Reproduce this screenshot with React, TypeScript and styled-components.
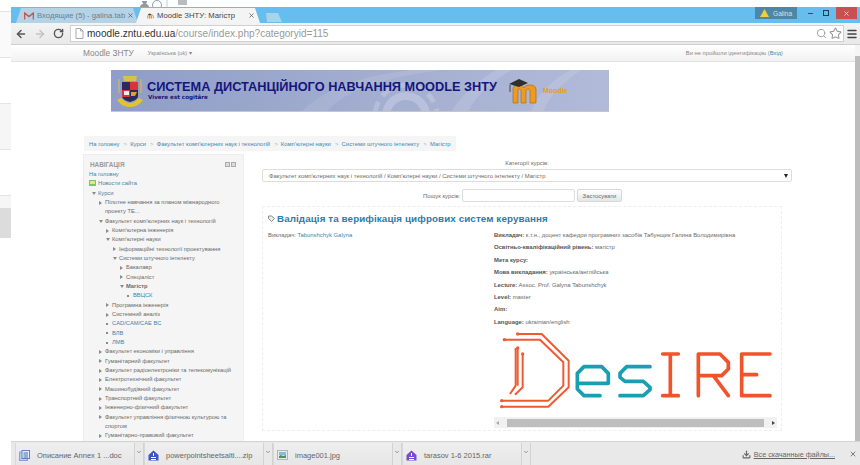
import styled, { createGlobalStyle } from 'styled-components';
import { ArrowLeft, ArrowRight, RotateCw, Search, Star, Menu, X, Minus, Download, ChevronDown } from 'lucide-react';

const GlobalStyle = createGlobalStyle`
	html, body {
		margin: 0;
		width: 860px;
		height: 465px;
		overflow: hidden;
		background: #fff;
		font-family: "Liberation Sans", Arial, sans-serif;
	}
	* { box-sizing: border-box; }
`;

const link = '#3f86ad';
const text = '#6a6a6a';

const Screen = styled.div`
	width: 860px;
	height: 465px;
	display: flex;
	flex-direction: column;
	overflow: hidden;
`;

const DesktopTop = styled.div`
	height: 7px;
	flex: none;
	display: flex;
	align-items: flex-end;
	padding-left: 140px;
	gap: 3px;
	overflow: hidden;
`;

const DesktopGlyph = styled.svg`
	display: block;
	flex: none;
`;

const Desktop = styled.div`
	flex: 1;
	min-height: 0;
	display: flex;
`;

const DesktopEdge = styled.div`
	width: 11px;
	flex: none;
	display: flex;
	flex-direction: column;
	background: #fff;
`;

const EdgeBand = styled.div<{ $h: number; $tone: string; $line?: boolean }>`
	height: ${p => p.$h}px;
	flex: none;
	background: ${p => p.$tone};
	border-bottom: ${p => (p.$line ? '1px solid #e4e4e4' : '0')};
`;

const Browser = styled.div`
	flex: 1;
	min-width: 0;
	display: flex;
	flex-direction: column;
`;

const TabStrip = styled.div`
	height: 16px;
	flex: none;
	display: flex;
	align-items: flex-end;
	background: #66bdf0;
	padding-left: 5px;
`;

const Tab = styled.div<{ $active?: boolean }>`
	width: ${p => (p.$active ? 124 : 122)}px;
	height: 15px;
	margin-right: -2px;
	display: flex;
	align-items: center;
	gap: 3px;
	padding: ${p => (p.$active ? '0 5px 0 11px' : '0 4px 0 8px')};
	font-size: 7.7px;
	white-space: nowrap;
	color: ${p => (p.$active ? '#444' : '#6f7f8a')};
	background: ${p => (p.$active ? '#f4f4f4' : '#b4d3e6')};
	clip-path: polygon(5px 0, calc(100% - 5px) 0, 100% 100%, 0 100%);
`;

const TabTitle = styled.span`
	flex: 1;
	min-width: 0;
`;

const NewTab = styled.div`
	width: 19px;
	height: 9px;
	margin: 0 0 1px 5px;
	background: #a9d3ec;
	clip-path: polygon(3px 0, calc(100% - 4px) 0, 100% 100%, 4px 100%);
`;

const WindowControls = styled.div`
	margin-left: auto;
	align-self: flex-start;
	display: flex;
	align-items: stretch;
	height: 12px;
	padding-right: 3px;
`;

const UserBadge = styled.div`
	width: 42px;
	display: flex;
	align-items: center;
	gap: 4px;
	padding-left: 5px;
	margin-right: 5px;
	font-size: 6.6px;
	color: #cfe3ee;
	background: #4c87a8;
`;

const ControlButton = styled.div<{ $close?: boolean }>`
	width: ${p => (p.$close ? 21 : 16)}px;
	margin-left: ${p => (p.$close ? 2 : 0)}px;
	display: flex;
	align-items: center;
	justify-content: center;
	color: ${p => (p.$close ? '#f3dcdc' : '#2b3a44')};
	background: ${p => (p.$close ? '#c9504f' : 'transparent')};
`;

const Restore = styled.div`
	width: 6px;
	height: 6px;
	border: 1.5px solid #2b3a44;
`;

const Toolbar = styled.div`
	height: 22px;
	flex: none;
	display: flex;
	align-items: center;
	padding: 0 1px 0 4px;
	background: linear-gradient(#f3f3f3, #e9e9e9);
	border-bottom: 1px solid #cfcfcf;
	color: #555;
`;

const NavButtons = styled.div`
	width: 55px;
	flex: none;
	display: flex;
	align-items: center;
	gap: 7px;
`;

const AddressBar = styled.div`
	flex: 1;
	height: 17px;
	display: flex;
	align-items: center;
	gap: 3px;
	padding: 0 1px 0 4px;
	background: #fff;
	border: 1px solid #d0d0d0;
	font-size: 10.05px;
	color: #999;
	white-space: nowrap;
`;

const Host = styled.span`
	color: #333;
`;

const AddressIcons = styled.div`
	margin-left: auto;
	display: flex;
	align-items: center;
	gap: 2px;
	color: #999;
`;

const MenuSlot = styled.div`
	width: 15px;
	flex: none;
	display: flex;
	justify-content: center;
	color: #444;
`;

const Viewport = styled.div`
	flex: 1;
	min-height: 0;
	display: flex;
	overflow: hidden;
`;

const Page = styled.div`
	flex: 1;
	min-width: 0;
	display: flex;
	flex-direction: column;
	overflow: hidden;
	background: #fff;
`;

const Scrollbar = styled.div`
	width: 5px;
	flex: none;
	display: flex;
	flex-direction: column;
	padding-top: 11px;
	background: #f5f5f5;
`;

const ScrollThumb = styled.div`
	flex: 1;
	background: #bdbdbd;
`;

const NavBar = styled.div`
	height: 17px;
	flex: none;
	display: flex;
	align-items: center;
	padding: 0 72px 0 72px;
	background: linear-gradient(#fff, #f2f2f2);
	border-bottom: 1px solid #e2e2e2;
	color: #888;
`;

const Brand = styled.span`
	font-size: 8.3px;
	margin-right: 14px;
`;

const Lang = styled.span`
	font-size: 5.6px;
`;

const Login = styled.span`
	margin-left: auto;
	font-size: 5.8px;
	a { color: ${link}; }
`;

const Banner = styled.div`
	position: relative;
	width: 498px;
	height: 42px;
	flex: none;
	margin: 8px 0 0 100px;
	display: flex;
	align-items: center;
	padding-left: 5px;
	overflow: hidden;
	background: linear-gradient(90deg, #8f9dc7, #a3aed0 55%, #b1bad9);
	border-bottom: 1px solid #dcbcc6;
`;

const BannerArt = styled.svg`
	position: absolute;
	inset: 0;
`;

const Crest = styled.svg`
	position: relative;
	flex: none;
	margin-right: 3px;
`;

const BannerTitles = styled.div`
	position: relative;
	width: 358px;
	margin-top: -2px;
`;

const BannerTitle = styled.div`
	font-size: 12.75px;
	line-height: 15px;
	font-weight: bold;
	white-space: nowrap;
	color: #15157e;
`;

const BannerMotto = styled.div`
	padding-left: 1px;
	font-size: 5.6px;
	font-weight: bold;
	font-family: "DejaVu Sans", Verdana, sans-serif;
	color: #15157e;
`;

const MoodleMark = styled.svg`
	position: relative;
	flex: none;
	margin-left: 3px;
`;

const MoodleWord = styled.span`
	position: relative;
	margin-left: 3px;
	font-size: 7px;
	font-weight: bold;
	color: #e69a2e;
`;

const Breadcrumb = styled.div`
	width: 372px;
	height: 15px;
	flex: none;
	margin: 24px 0 3px 73px;
	display: flex;
	align-items: center;
	gap: 4px;
	padding-left: 5px;
	font-size: 5.9px;
	white-space: nowrap;
	color: ${link};
	background: #f5f5f5;
`;

const Crumb = styled.span``;

const CrumbSep = styled.span`
	color: #b0b0b0;
`;

const Columns = styled.div`
	flex: 1;
	min-height: 0;
	display: flex;
	padding-left: 72px;
	gap: 18px;
`;

const NavBlock = styled.div`
	width: 161px;
	flex: none;
	padding: 4px 0 0 5px;
	background: #f5f5f5;
	border: 1px solid #eee;
	border-bottom: 0;
`;

const NavHead = styled.div`
	height: 10px;
	display: flex;
	align-items: center;
	justify-content: space-between;
	padding: 0 7px 0 1px;
	margin-bottom: 1px;
	font-size: 6.4px;
	font-weight: bold;
	color: #9a9a9a;
`;

const DockIcons = styled.div`
	display: flex;
	gap: 1px;
`;

const DockIcon = styled.div`
	width: 5px;
	height: 5px;
	border: 1px solid #aaa;
	background: #ddd;
`;

const TreeRow = styled.div<{ $level: number; $link?: boolean; $bold?: boolean }>`
	display: flex;
	min-height: 9.33px;
	padding-left: ${p => p.$level * 7}px;
	font-size: 5.75px;
	line-height: 9.33px;
	white-space: pre-line;
	font-weight: ${p => (p.$bold ? 'bold' : 'normal')};
	color: ${p => (p.$link ? link : text)};
`;

const Marker = styled.span`
	width: 9px;
	height: 9.33px;
	flex: none;
	display: flex;
	align-items: center;
`;

const Arrow = styled.i<{ $open?: boolean }>`
	width: 0;
	height: 0;
	margin-left: 2.5px;
	${p =>
		p.$open
			? 'border-left: 2.5px solid transparent; border-right: 2.5px solid transparent; border-top: 3px solid #8a8a8a;'
			: 'border-top: 2.5px solid transparent; border-bottom: 2.5px solid transparent; border-left: 3px solid #8a8a8a;'}
`;

const Bullet = styled.i`
	width: 2px;
	height: 2px;
	margin-left: 3px;
	background: #8a8a8a;
`;

const SiteIcon = styled.svg`
	flex: none;
	margin: 1px 2px 0 0;
`;

const Main = styled.div`
	width: 530px;
	flex: none;
	display: flex;
	flex-direction: column;
	padding-top: 5px;
	font-size: 5.9px;
	color: ${text};
`;

const CategoryLabel = styled.div`
	height: 9px;
	text-align: center;
	line-height: 9px;
`;

const CategorySelect = styled.div`
	height: 13px;
	margin-top: 1px;
	display: flex;
	align-items: center;
	justify-content: space-between;
	padding: 0 3px 0 6px;
	background: #fff;
	border: 1px solid #ddd;
	border-radius: 2px;
`;

const SelectCaret = styled.i`
	width: 0;
	height: 0;
	border-left: 2.5px solid transparent;
	border-right: 2.5px solid transparent;
	border-top: 4px solid #222;
`;

const SearchRow = styled.div`
	height: 13px;
	margin: 7px 0 4px 161px;
	display: flex;
	align-items: center;
`;

const SearchLabel = styled.span`
	width: 39px;
`;

const SearchInput = styled.div`
	width: 113px;
	height: 13px;
	margin-right: 2px;
	background: #fff;
	border: 1px solid #ddd;
	border-radius: 2px;
`;

const ApplyButton = styled.div`
	width: 45px;
	height: 13px;
	display: flex;
	align-items: center;
	justify-content: center;
	background: linear-gradient(#fff, #e6e6e6);
	border: 1px solid #d8d8d8;
	border-radius: 2px;
`;

const CourseBox = styled.div`
	width: 520px;
	height: 225px;
	flex: none;
	padding: 5px 5px 0 5px;
	border: 1px dashed #eee;
`;

const CourseTitle = styled.div`
	height: 13px;
	display: flex;
	align-items: center;
	gap: 2px;
	font-size: 9.8px;
	font-weight: bold;
	letter-spacing: 0.1px;
	white-space: nowrap;
	color: #2b7cab;
`;

const CourseBody = styled.div`
	display: flex;
	margin-top: 4px;
`;

const Teacher = styled.div`
	width: 226px;
	flex: none;
	line-height: 12.4px;
	a { color: ${link}; }
`;

const Summary = styled.div`
	width: 284px;
	flex: none;
`;

const SummaryLine = styled.div`
	height: 12.4px;
	line-height: 12.4px;
	white-space: nowrap;
	b { color: #555; }
`;

const DesireLogo = styled.svg`
	display: block;
	margin-top: -4px;
`;

const LogoScroll = styled.div`
	width: 283px;
	height: 11px;
	margin-top: 3px;
	display: flex;
	align-items: center;
	justify-content: space-between;
	padding: 0 2px;
	background: #f1f1f1;
`;

const LogoThumb = styled.div`
	width: 257px;
	height: 8px;
	background: #bebebe;
`;

const ScrollArrow = styled.i<{ $dir: 'left' | 'right' }>`
	width: 0;
	height: 0;
	border-top: 2px solid transparent;
	border-bottom: 2px solid transparent;
	${p => (p.$dir === 'left' ? 'border-right: 3px solid #aaa;' : 'border-left: 3px solid #444;')}
`;

const Downloads = styled.div`
	height: 24px;
	flex: none;
	display: flex;
	align-items: stretch;
	padding: 1px 0 0 4px;
	background: #e9e9e9;
	border-top: 1px solid #d4d4d4;
`;

const DownloadItem = styled.div`
	width: 129px;
	flex: none;
	display: flex;
	border-left: 1px solid #d8d8d8;
`;

const DownloadName = styled.div`
	flex: 1;
	display: flex;
	align-items: center;
	gap: 7px;
	padding: 2px 0 0 3px;
	font-size: 7.5px;
	white-space: nowrap;
	color: #666;
	background: linear-gradient(#efefef, #e6e6e6);
	border-right: 1px solid #d2d2d2;
`;

const DownloadCaret = styled.div`
	width: 9px;
	flex: none;
	display: flex;
	justify-content: center;
	padding-top: 6px;
	border-right: 1px solid #d2d2d2;
	color: #777;
`;

const AllDownloads = styled.div`
	margin-left: auto;
	display: flex;
	align-items: center;
	gap: 3px;
	padding-right: 3px;
	font-size: 7.2px;
	color: #666;
	span { text-decoration: underline; margin-right: 11px; }
`;

type Node = {
	level: number;
	label: string;
	mark?: 'open' | 'closed' | 'dot' | 'site';
	link?: boolean;
	bold?: boolean;
};

const tree: Node[] = [
	{ level: 0, label: 'На головну', link: true },
	{ level: 0, label: 'Новости сайта', mark: 'site', link: true },
	{ level: 0, label: 'Курси', mark: 'open', link: true },
	{ level: 1, label: 'Пілотне навчання за планом міжнародного\nпроекту TE...', mark: 'closed' },
	{ level: 1, label: 'Факультет комп\'ютерних наук і технологій', mark: 'open' },
	{ level: 2, label: 'Комп\'ютерна інженерія', mark: 'closed' },
	{ level: 2, label: 'Комп\'ютерні науки', mark: 'open' },
	{ level: 3, label: 'Інформаційні технології проектування', mark: 'closed' },
	{ level: 3, label: 'Системи штучного інтелекту', mark: 'open' },
	{ level: 4, label: 'Бакалавр', mark: 'closed' },
	{ level: 4, label: 'Спеціаліст', mark: 'closed' },
	{ level: 4, label: 'Магістр', mark: 'open', bold: true },
	{ level: 5, label: 'ВВЦСК', mark: 'dot', link: true },
	{ level: 2, label: 'Програмна інженерія', mark: 'closed' },
	{ level: 2, label: 'Системний аналіз', mark: 'closed' },
	{ level: 2, label: 'CAD/CAM/CAE ВС', mark: 'dot', link: true },
	{ level: 2, label: 'ВЛВ', mark: 'dot', link: true },
	{ level: 2, label: 'ЛМВ', mark: 'dot', link: true },
	{ level: 1, label: 'Факультет економіки і управління', mark: 'closed' },
	{ level: 1, label: 'Гуманітарний факультет', mark: 'closed' },
	{ level: 1, label: 'Факультет радіоелектроніки та телекомунікацій', mark: 'closed' },
	{ level: 1, label: 'Електротехнічний факультет', mark: 'closed' },
	{ level: 1, label: 'Машинобудівний факультет', mark: 'closed' },
	{ level: 1, label: 'Транспортний факультет', mark: 'closed' },
	{ level: 1, label: 'Інженерно-фізичний факультет', mark: 'closed' },
	{ level: 1, label: 'Факультет управління фізичною культурою та\nспортом', mark: 'closed' },
	{ level: 1, label: 'Гуманітарно-правовий факультет', mark: 'closed' },
];

const crumbs = [
	'На головну',
	'Курси',
	'Факультет комп\'ютерних наук і технологій',
	'Комп\'ютерні науки',
	'Системи штучного інтелекту',
	'Магістр',
];

const summary: [string, string][] = [
	['Викладач:', 'к.т.н., доцент кафедри програмних засобів Табунщик Галина Володимирівна'],
	['Освітньо-кваліфікаційний рівень:', 'магістр'],
	['Мета курсу:', ''],
	['Мова викладання:', 'українська/англійська'],
	['Lecture:', 'Assoc. Prof. Galyna Tabunshchyk'],
	['Level:', 'master'],
	['Aim:', ''],
	['Language:', 'ukrainian/english'],
];

const GmailIcon = () => (
	<svg width="10" height="8" viewBox="0 0 10 8">
		<path d="M0.5 7.5V1L5 4.6 9.5 1v6.5" fill="none" stroke="#c9574c" strokeWidth="1.6" />
	</svg>
);

const MoodleTabIcon = () => (
	<svg width="7" height="8" viewBox="0 0 10 9">
		<path d="M1 8V4.2C1 3 3.4 3 3.4 4.2V8M3.6 8V4.2C3.6 3 6 3 6 4.2V8M6.2 8V4.2C6.2 3 9 3 9 4.2V8" fill="none" stroke="#e8922a" strokeWidth="1.4" />
		<path d="M1 2.4 4 1l3 1.4-3 1z" fill="#444" />
	</svg>
);

const PageIcon = () => (
	<svg width="9" height="11" viewBox="0 0 9 11">
		<path d="M1 .5h4.5L8 3v7.5H1zM5.5 .5V3H8" fill="#fff" stroke="#aaa" />
	</svg>
);

const ArchiveIcon = ({ color }: { color: string }) => (
	<svg width="11" height="11" viewBox="0 0 11 11">
		<path d="M5.5 .5 10.5 5v5.5H.5V5z" fill={color} />
		<path d="M3 7.5h5M3 9.5h5M5.5 3v3" stroke="#fff" />
	</svg>
);

const WordIcon = () => (
	<svg width="11" height="11" viewBox="0 0 11 11">
		<rect x="0.5" y="2" width="8" height="8.5" fill="#b9cbe6" stroke="#8aa3cc" />
		<rect x="3" y="0.5" width="7.5" height="8" fill="#e8eef8" stroke="#5f83bd" />
		<path d="M4.5 3h4.5M4.5 5h4.5M4.5 7h4.5" stroke="#3f6bb0" />
	</svg>
);

const PictureIcon = () => (
	<svg width="11" height="10" viewBox="0 0 11 10">
		<rect x="0.5" y="0.5" width="10" height="9" fill="#e7eef2" stroke="#a9b6bd" />
		<rect x="2" y="2" width="7" height="3" fill="#7fbdd8" />
		<path d="M2 8V6l2-1 2 1 3-1v3z" fill="#5d8a5e" />
	</svg>
);

const CrestMark = () => (
	<Crest width="28" height="36" viewBox="0 0 28 36">
		<path d="M7 3h14l-1 5H8z" fill="#d6c24a" />
		<path d="M3 6v14M25 6v14" stroke="#d6c24a" strokeWidth="1" />
		<path d="M6 9h16v14c0 3-4 5-8 6-4-1-8-3-8-6z" fill="#2c2a5c" />
		<rect x="14" y="9" width="8" height="8" fill="#d8323a" />
		<rect x="6" y="17" width="8" height="7" fill="#d8323a" />
		<rect x="8" y="18" width="5" height="4" fill="#f4efe4" />
		<path d="M15 19h6l-2 4h-4z" fill="#d6a52a" />
		<path d="M1 27c4 5 8 7 13 7s9-2 13-7l-4-2c-3 3-6 5-9 5s-6-2-9-5z" fill="#e4c22c" />
	</Crest>
);

const MoodleLogo = () => (
	<MoodleMark width="32" height="26" viewBox="0 0 32 26">
		<path d="M5 25V11c0-3 3-4 6-4s4 1 5 3c1-2 3-3 6-3 4 0 6 2 6 5v13h-6V13c0-1-1-2-2-2s-2 1-2 2v12h-5V13c0-1-1-2-2-2s-1 1-1 2v12z" fill="#ee9a1e" stroke="#a8620f" strokeWidth="0.6" />
		<path d="M1 6 11 1l9 4-9 4z" fill="#2f2f2f" />
		<path d="M2 7v7" stroke="#444" strokeWidth="1" />
	</MoodleMark>
);

const BannerBackdrop = () => (
	<BannerArt width="498" height="42" viewBox="0 0 498 42">
		<path d="M190 42C215 18 250 6 300 0h30C270 8 235 20 215 42z" fill="#fff" opacity="0.1" />
		<path d="M340 42c10-16 25-30 45-42h16c-22 12-36 26-44 42z" fill="#fff" opacity="0.12" />
		<circle cx="295" cy="46" r="20" fill="none" stroke="#fff" strokeWidth="8" opacity="0.22" />
		<circle cx="295" cy="46" r="31" fill="none" stroke="#fff" strokeWidth="5" strokeDasharray="10 7" opacity="0.2" />
		<path d="M420 42c5-16 20-32 40-42h10c-18 12-32 26-38 42z" fill="#fff" opacity="0.12" />
	</BannerArt>
);

const DesireMark = () => (
	<DesireLogo width="300" height="90" viewBox="42 0 900 270">
		<g fill="none" stroke="#ef5a32" strokeWidth="6" strokeLinejoin="round">
			<path d="M73 47H180L250 115V185L205 230H65" />
			<path d="M113 30H185L266 110V190L205 248H65" />
			<path d="M107 72V185L90 210" />
			<path d="M113 72V185" />
			<path d="M128 90V190L105 212" />
		</g>
		<g fill="#ef5a32">
			<circle cx="73" cy="47" r="5" />
			<circle cx="113" cy="30" r="5" />
			<circle cx="113" cy="72" r="5" />
			<circle cx="128" cy="90" r="5" />
			<circle cx="65" cy="230" r="5" />
			<circle cx="65" cy="248" r="5" />
		</g>
		<g fill="none" stroke="#1a9fb2" strokeWidth="11" strokeLinecap="round" strokeLinejoin="round">
			<path d="M292 178H385V148L365 128H312L292 148V195L312 215H360" />
			<path d="M510 128H440L420 148V160L435 172H490L510 190V197L490 215H420" />
		</g>
		<g fill="none" stroke="#f1542a" strokeWidth="11" strokeLinecap="round" strokeLinejoin="round">
			<path d="M548 90H595M571 90V215M548 215H595" />
			<path d="M655 215V90H720L745 115V135L725 155H655M700 155L745 215" />
			<path d="M870 90H785V215H870M785 152H830" />
		</g>
	</DesireLogo>
);

const renderMarker = (mark: Node['mark']) => {
	if (mark === 'site') {
		return (
			<SiteIcon width="7" height="6" viewBox="0 0 7 6">
				<rect width="7" height="6" fill="#7cc46a" />
				<rect x="1" y="1" width="5" height="3" fill="#e6e48a" />
			</SiteIcon>
		);
	}
	if (!mark) return null;
	return <Marker>{mark === 'dot' ? <Bullet /> : <Arrow $open={mark === 'open'} />}</Marker>;
};

const downloads = [
	{ name: 'Описание Annex 1 ...doc', icon: <WordIcon /> },
	{ name: 'powerpointsheetsalti....zip', icon: <ArchiveIcon color="#3a55c8" /> },
	{ name: 'image001.jpg', icon: <PictureIcon /> },
	{ name: 'tarasov 1-6 2015.rar', icon: <ArchiveIcon color="#7a4bd0" /> },
];

export default function App() {
	return (
		<Screen>
			<GlobalStyle />
			<DesktopTop>
				<DesktopGlyph width="22" height="7" viewBox="0 0 22 7">
					<path d="M0 7c0-2 2-3 3-3s-1-1-1-3h5c0 2-1 3-1 3 1 0 3 1 3 3z" fill="#999" />
					<circle cx="17" cy="5" r="4.5" fill="none" stroke="#999" />
				</DesktopGlyph>
				<DesktopGlyph width="22" height="7" viewBox="0 0 22 7">
					<path d="M2 0v7" stroke="#ccc" />
					<rect x="13" y="0" width="9" height="5" fill="#bbb" />
				</DesktopGlyph>
			</DesktopTop>
			<Desktop>
				<DesktopEdge>
					<EdgeBand $h={5} $tone="#fff" $line />
					<EdgeBand $h={46} $tone="#fafafa" $line />
					<EdgeBand $h={46} $tone="#fff" $line />
					<EdgeBand $h={46} $tone="#f6f6f6" $line />
					<EdgeBand $h={46} $tone="#fff" $line />
					<EdgeBand $h={12} $tone="#f6f6f6" />
					<EdgeBand $h={30} $tone="#dcdcdc" />
				</DesktopEdge>
				<Browser>
					<TabStrip>
						<Tab>
							<GmailIcon />
							<TabTitle>Входящие (5) - galina.tab</TabTitle>
							<X size={7} strokeWidth={2.5} color="#556" />
						</Tab>
						<Tab $active>
							<MoodleTabIcon />
							<TabTitle>Moodle ЗНТУ: Магістр</TabTitle>
							<X size={7} strokeWidth={2.5} color="#555" />
						</Tab>
						<NewTab />
						<WindowControls>
							<UserBadge>
								<svg width="9" height="8" viewBox="0 0 9 8">
									<path d="M4.5 0 9 8H0z" fill="#f0cf3c" />
								</svg>
								Galina
							</UserBadge>
							<ControlButton>
								<Minus size={7} strokeWidth={3} />
							</ControlButton>
							<ControlButton>
								<Restore />
							</ControlButton>
							<ControlButton $close>
								<X size={7} strokeWidth={3} />
							</ControlButton>
						</WindowControls>
					</TabStrip>
					<Toolbar>
						<NavButtons>
							<ArrowLeft size={12} strokeWidth={3} />
							<ArrowRight size={12} strokeWidth={3} color="#c4c4c4" />
							<RotateCw size={11} strokeWidth={3} />
						</NavButtons>
						<AddressBar>
							<PageIcon />
							<span>
								<Host>moodle.zntu.edu.ua</Host>/course/index.php?categoryid=115
							</span>
							<AddressIcons>
								<Search size={11} />
								<Star size={13} />
							</AddressIcons>
						</AddressBar>
						<MenuSlot>
							<Menu size={12} strokeWidth={3} />
						</MenuSlot>
					</Toolbar>
					<Viewport>
						<Page>
							<NavBar>
								<Brand>Moodle ЗНТУ</Brand>
								<Lang>Українська (uk) ▾</Lang>
								<Login>
									Ви не пройшли ідентифікацію (<a>Вхід</a>)
								</Login>
							</NavBar>
							<Banner>
								<BannerBackdrop />
								<CrestMark />
								<BannerTitles>
									<BannerTitle>СИСТЕМА ДИСТАНЦІЙНОГО НАВЧАННЯ MOODLE ЗНТУ</BannerTitle>
									<BannerMotto>Vivere est cogitâre</BannerMotto>
								</BannerTitles>
								<MoodleLogo />
								<MoodleWord>Moodle</MoodleWord>
							</Banner>
							<Breadcrumb>
								{crumbs.map((crumb, i) => (
									<Crumb key={crumb}>
										{i > 0 && <CrumbSep>&gt;&nbsp;&nbsp;</CrumbSep>}
										{crumb}
									</Crumb>
								))}
							</Breadcrumb>
							<Columns>
								<NavBlock>
									<NavHead>
										НАВІГАЦІЯ
										<DockIcons>
											<DockIcon />
											<DockIcon />
										</DockIcons>
									</NavHead>
									{tree.map(node => (
										<TreeRow key={node.label} $level={node.level} $link={node.link} $bold={node.bold}>
											{renderMarker(node.mark)}
											<span>{node.label}</span>
										</TreeRow>
									))}
								</NavBlock>
								<Main>
									<CategoryLabel>Категорії курсів:</CategoryLabel>
									<CategorySelect>
										Факультет комп'ютерних наук і технологій / Комп'ютерні науки / Системи штучного інтелекту / Магістр
										<SelectCaret />
									</CategorySelect>
									<SearchRow>
										<SearchLabel>Пошук курсів:</SearchLabel>
										<SearchInput />
										<ApplyButton>Застосувати</ApplyButton>
									</SearchRow>
									<CourseBox>
										<CourseTitle>
											<svg width="7" height="7" viewBox="0 0 7 7">
												<path d="M.5 1h3l3 2.5-3 3-3-3z" fill="#eee" stroke="#888" />
											</svg>
											Валідація та верифікація цифрових систем керування
										</CourseTitle>
										<CourseBody>
											<Teacher>
												Викладач: <a>Tabunshchyk Galyna</a>
											</Teacher>
											<Summary>
												{summary.map(([name, value]) => (
													<SummaryLine key={name}>
														<b>{name}</b> {value}
													</SummaryLine>
												))}
												<DesireMark />
												<LogoScroll>
													<ScrollArrow $dir="left" />
													<LogoThumb />
													<ScrollArrow $dir="right" />
												</LogoScroll>
											</Summary>
										</CourseBody>
									</CourseBox>
								</Main>
							</Columns>
						</Page>
						<Scrollbar>
							<ScrollThumb />
						</Scrollbar>
					</Viewport>
					<Downloads>
						{downloads.map(item => (
							<DownloadItem key={item.name}>
								<DownloadName>
									{item.icon}
									{item.name}
								</DownloadName>
								<DownloadCaret>
									<ChevronDown size={6} strokeWidth={3} />
								</DownloadCaret>
							</DownloadItem>
						))}
						<AllDownloads>
							<Download size={9} strokeWidth={3} />
							<span>Все скачанные файлы...</span>
							<X size={8} strokeWidth={2.5} />
						</AllDownloads>
					</Downloads>
				</Browser>
			</Desktop>
		</Screen>
	);
}
